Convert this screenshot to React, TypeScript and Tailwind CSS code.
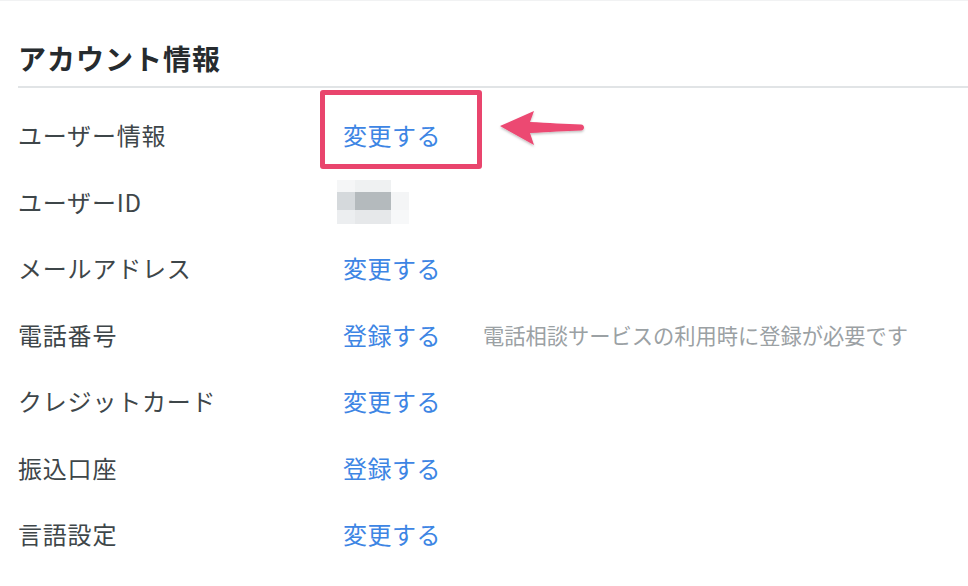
const rows = [
  { label: "ユーザー情報", action: "変更する" },
  { label: "ユーザーID", action: null },
  { label: "メールアドレス", action: "変更する" },
  { label: "電話番号", action: "登録する", note: "電話相談サービスの利用時に登録が必要です" },
  { label: "クレジットカード", action: "変更する" },
  { label: "振込口座", action: "登録する" },
  { label: "言語設定", action: "変更する" },
];

const App = () => {
  return (
    <div
      className="relative w-[968px] h-[586px] bg-white border-t border-[#f1f2f3] overflow-hidden"
      style={{ fontFamily: '"Noto Sans CJK JP", "Noto Sans", sans-serif' }}
    >
      <div className="pl-[18px] pt-[37px]">
        <h2 className="text-[28px] leading-[40px] font-bold text-[#262b2e] tracking-[1px]">アカウント情報</h2>
        <div className="mt-[8px] h-[2px] bg-[#e1e4e6]" />
        <div className="mt-[14px]">
          {rows.map((r, i) => (
            <div key={i} className="flex items-center h-[66.5px]">
              <div className="w-[325px] text-[24px] text-[#3e4649] tracking-[0.8px]">{r.label}</div>
              <div className="relative text-[24px] leading-[36px] text-[#3d85e4] tracking-[0.5px]">
                {r.action ? (
                  <span>{r.action}</span>
                ) : (
                  <div className="flex flex-col">
                    <div className="flex ml-[-6px]">
                      <div className="w-[18px] h-[12px] bg-[#f5f6f7]" />
                      <div className="w-[36px] h-[12px] bg-[#eff1f2]" />
                    </div>
                    <div className="flex ml-[-6px]">
                      <div className="w-[18px] h-[18px] bg-[#d5d9dc]" />
                      <div className="w-[36px] h-[18px] bg-[#b4babd]" />
                      <div className="w-[18px] h-[18px] bg-[#f4f5f6]" />
                    </div>
                    <div className="flex ml-[-6px]">
                      <div className="w-[18px] h-[14px] bg-[#eceef0]" />
                      <div className="w-[36px] h-[14px] bg-[#e6e8ea]" />
                      <div className="w-[18px] h-[14px] bg-[#f7f8f9]" />
                    </div>
                  </div>
                )}
                {i === 0 && (
                  <div className="absolute left-[-23px] top-[-27px] w-[162px] h-[79px] border-[5px] border-[#e9456d] rounded-[3px]" />
                )}
              </div>
              {r.note && <div className="ml-[42px] text-[21.25px] text-[#9ba1a4]">{r.note}</div>}
            </div>
          ))}
        </div>
      </div>
      <svg
        className="absolute left-[496px] top-[104px]"
        width="94"
        height="46"
        viewBox="0 0 94 46"
      >
        <defs>
          <filter id="sh" x="-20%" y="-30%" width="140%" height="160%">
            <feDropShadow dx="0" dy="1.5" stdDeviation="1.2" floodColor="#000" floodOpacity="0.25" />
          </filter>
        </defs>
        <path
          d="M4 21 L38 6 L34 17 C52 18 70 19 85 19.5 C89 19.7 89 25.3 85 25.5 C70 26 52 27 34 28 L38 40 Z"
          fill="#ec4872"
          filter="url(#sh)"
        />
      </svg>
    </div>
  );
};

export default App;
